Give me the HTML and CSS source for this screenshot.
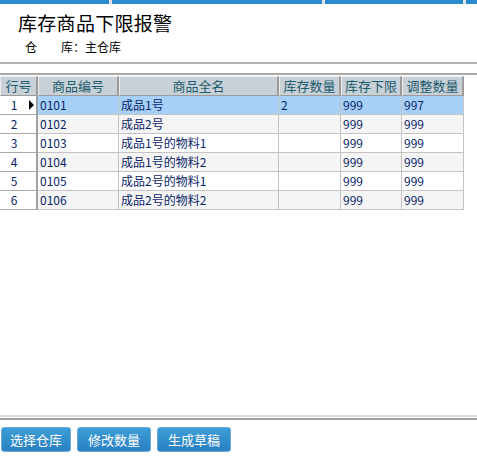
FILE: index.html
```html
<!DOCTYPE html>
<html lang="zh">
<head>
<meta charset="utf-8">
<link rel="stylesheet" href="styles.css">
</head>
<body>
<div class="page">
  <div class="topbar">
    <span class="seg s1"></span><span class="seg s2"></span><span class="seg s3"></span><span class="seg s4"></span>
  </div>
  <div class="head">
    <h1 class="title">库存商品下限报警</h1>
    <div class="info"><span class="label">仓　　库：</span>主仓库</div>
  </div>
  <div class="rule-top"></div>
  <div class="grid-wrap">
    <div class="grid">
      <div class="th">行号</div><div class="th">商品编号</div><div class="th">商品全名</div><div class="th">库存数量</div><div class="th">库存下限</div><div class="th">调整数量</div>

      <div class="rn">1<span class="arrow"></span></div><div class="td sel">0101</div><div class="td sel">成品1号</div><div class="td sel">2</div><div class="td sel">999</div><div class="td sel">997</div>
      <div class="rn">2</div><div class="td alt">0102</div><div class="td alt">成品2号</div><div class="td alt"></div><div class="td alt">999</div><div class="td alt">999</div>
      <div class="rn">3</div><div class="td">0103</div><div class="td">成品1号的物料1</div><div class="td"></div><div class="td">999</div><div class="td">999</div>
      <div class="rn">4</div><div class="td alt">0104</div><div class="td alt">成品1号的物料2</div><div class="td alt"></div><div class="td alt">999</div><div class="td alt">999</div>
      <div class="rn">5</div><div class="td">0105</div><div class="td">成品2号的物料1</div><div class="td"></div><div class="td">999</div><div class="td">999</div>
      <div class="rn">6</div><div class="td alt">0106</div><div class="td alt">成品2号的物料2</div><div class="td alt"></div><div class="td alt">999</div><div class="td alt">999</div>
    </div>
  </div>
  <div class="rule-bottom"></div>
  <div class="actions">
    <button class="btn b1">选择仓库</button>
    <button class="btn">修改数量</button>
    <button class="btn">生成草稿</button>
  </div>
</div>
</body>
</html>
```

FILE: styles.css
```css
* { box-sizing: border-box; }
html, body { margin: 0; padding: 0; background: #fff; }
body {
  font-family: "Noto Sans CJK SC", "DejaVu Sans", sans-serif;
  width: 477px;
  height: 458px;
  overflow: hidden;
}
.page { display: flex; flex-direction: column; height: 458px; }

.topbar { display: flex; height: 4px; background: #e4e4e4; gap: 3px; }
.seg { background: #2a8ad0; height: 4px; }
.s1 { width: 109px; }
.s2 { width: 210px; }
.s3 { width: 138px; }
.s4 { flex: 1; }

.head { padding: 6px 0 0 18px; height: 58px; }
.title {
  margin: 0;
  font-size: 19px;
  font-weight: normal;
  line-height: 26px;
  color: #000;
  letter-spacing: 0.3px;
}
.info {
  margin: 3px 0 0 7px;
  font-size: 12px;
  line-height: 16px;
  color: #000;
}

.rule-top { height: 2px; background: #b4b4b4; }

.grid-wrap {
  margin-top: 9px;
  border-top: 2px solid #a8a8a8;
  padding-top: 1px;
  flex: 1;
}
.grid {
  display: grid;
  grid-template-columns: 38px 81px 160px 62px 61px 62px;
  grid-auto-rows: 19px;
  grid-template-rows: 20px;
  width: 464px;
  font-size: 12px;
}

.th {
  background: #c8d0d8;
  color: #1d5c6c;
  font-size: 13px;
  line-height: 17px;
  text-align: center;
  border-top: 1px solid #ececec;
  border-left: 1px solid #ececec;
  border-right: 2px solid #9c9c9c;
  border-bottom: 1px solid #9c9c9c;
  white-space: nowrap;
  overflow: hidden;
}
.td {
  padding: 0 0 0 2px;
  color: #0a2468;
  line-height: 18px;
  border-right: 1px solid #c4c4c4;
  border-bottom: 1px solid #c4c4c4;
  white-space: nowrap;
  overflow: hidden;
}
.td.alt { background: #f5f5f5; }
.td.sel { background: #a6d0f8; }
.rn {
  position: relative;
  background: #fff;
  color: #0a2468;
  text-align: center;
  line-height: 18px;
  padding: 0 8px 0 0;
  border-right: 2px solid #a0a0a0;
  border-bottom: 1px solid #a8a8a8;
}

.arrow {
  position: absolute;
  right: 2px;
  top: 4px;
  width: 0;
  height: 0;
  border-top: 5px solid transparent;
  border-bottom: 5px solid transparent;
  border-left: 5px solid #000;
}

.rule-bottom {
  height: 5px;
  border-top: 2px solid #dedede;
  border-bottom: 2px solid #a0a0a0;
}
.actions {
  display: flex;
  gap: 6px;
  padding: 7px 0 0 1px;
  height: 38px;
}
.btn {
  height: 25px;
  width: 74px;
  padding: 0;
  border: 1px solid #6aa8d8;
  border-radius: 3px;
  background: linear-gradient(#3d9ed8, #2a7fc0);
  color: #fff;
  font-family: "Noto Sans CJK SC", "DejaVu Sans", sans-serif;
  font-size: 13px;
  line-height: 22px;
}
.btn.b1 { width: 70px; }
```
